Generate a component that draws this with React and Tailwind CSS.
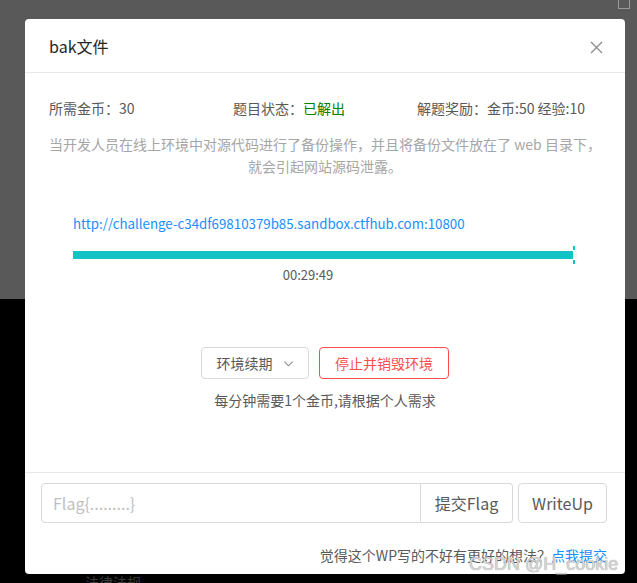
import { useState } from 'react';

const font = { fontFamily: '"Noto Sans CJK SC", "Noto Sans", sans-serif' };

const CloseIcon = () => (
    <svg width="13" height="13" viewBox="0 0 13 13" fill="none" stroke="#8c8c8c" strokeWidth="1.3">
        <path d="M1 1 L12 12 M12 1 L1 12" />
    </svg>
);

const DownIcon = () => (
    <svg width="11" height="11" viewBox="0 0 12 12" fill="none" stroke="#8c8c8c" strokeWidth="1.2">
        <path d="M1.5 4 L6 8.5 L10.5 4" />
    </svg>
);

const App = () => {
    const [flag, setFlag] = useState('');

    return (
        <div className="relative w-[637px] h-[583px] overflow-hidden flex flex-col" style={font}>
            <div className="h-[299px] bg-[#595959] relative">
                <div className="absolute right-[7px] -top-[2px] w-[12px] h-[11px] border border-[#9a9a9a]"></div>
            </div>
            <div className="flex-1 bg-black relative">
                <div className="absolute left-[85px] top-[272px] text-[14px] leading-[22px] text-[#3a3a3a]">法律法规</div>
            </div>

            <div className="absolute left-[25px] top-[19px] w-[600px] h-[555px] bg-white rounded-[4px] flex flex-col">
                {/* header */}
                <div className="h-[54px] px-6 flex items-center justify-between border-b border-[#e8e8e8]">
                    <h2 className="text-[16px] text-[#262626] leading-[22px]">bak文件</h2>
                    <button className="mr-[-2px] mt-[4px]"><CloseIcon /></button>
                </div>

                {/* body */}
                <div className="h-[399px] px-6 pt-[24px] text-[14px] leading-[22px] text-[#595959]">
                    <div className="grid grid-cols-3">
                        <span>所需金币：30</span>
                        <span>题目状态：<span className="text-[#008000]">已解出</span></span>
                        <span>解题奖励：金币:50 经验:10</span>
                    </div>
                    <p className="mt-[14px] text-center text-[#a6a6a6]">
                        当开发人员在线上环境中对源代码进行了备份操作，并且将备份文件放在了 web 目录下，<br />
                        就会引起网站源码泄露。
                    </p>

                    <div className="px-6 mt-[36px]">
                        <a className="block text-[13.3px] text-[#1890ff]">http://challenge-c34df69810379b85.sandbox.ctfhub.com:10800</a>
                        <div className="relative mt-[16px] h-[8px] w-[504px] bg-[#f5f5f5]">
                            <div className="h-full w-[500px] bg-[#13c2c2]"></div>
                            <div className="absolute left-[500px] -top-[5px] w-[2px] h-[4px] bg-[#13c2c2]"></div>
                            <div className="absolute left-[500px] top-[9px] w-[2px] h-[4px] bg-[#13c2c2]"></div>
                        </div>
                        <div className="mt-[5px] w-[470px] text-center text-[13px] text-[#595959]">00:29:49</div>
                    </div>

                    <div className="mt-[61px] flex justify-center gap-[10px]">
                        <button className="h-[32px] w-[108px] border border-[#d9d9d9] rounded-[4px] flex items-center justify-center gap-[10px] text-[#595959]">
                            环境续期 <DownIcon />
                        </button>
                        <button className="h-[32px] w-[130px] border border-[#ff4d4f] rounded-[4px] text-[#ff4d4f]">
                            停止并销毁环境
                        </button>
                    </div>
                    <p className="mt-[10px] text-center">每分钟需要1个金币,请根据个人需求</p>
                </div>

                {/* footer */}
                <div className="flex-1 border-t border-[#e8e8e8] pl-4 pr-[18px] pt-[10px]">
                    <div className="flex">
                        <input
                            value={flag}
                            onChange={(e) => setFlag(e.target.value)}
                            placeholder="Flag{.........}"
                            className="h-[40px] w-[380px] border border-[#d9d9d9] rounded-l-[4px] px-[11px] text-[16px] text-[#595959] placeholder-[#bfbfbf] outline-none"
                        />
                        <button className="h-[40px] w-[92px] border border-l-0 border-[#d9d9d9] rounded-r-[4px] text-[16px] text-[#595959]">提交Flag</button>
                        <button className="ml-[5px] h-[40px] w-[89px] border border-[#d9d9d9] rounded-[4px] text-[16px] text-[#595959]">WriteUp</button>
                    </div>
                    <p className="mt-[21px] text-right text-[14px] leading-[22px] text-[#595959]">
                        觉得这个WP写的不好有更好的想法？<a className="text-[#1890ff]">点我提交</a>
                    </p>
                </div>
            </div>

            {/* watermark */}
            <div
                className="absolute left-[469px] top-[553px] text-[18px] leading-[22px] text-[#d4d4d4] pointer-events-none"
                style={{ fontFamily: '"Liberation Sans", Arial, sans-serif', textShadow: '0 0 1px #8c8c8c' }}
            >
                CSDN @H_cookie
            </div>
        </div>
    );
};

export default App;
